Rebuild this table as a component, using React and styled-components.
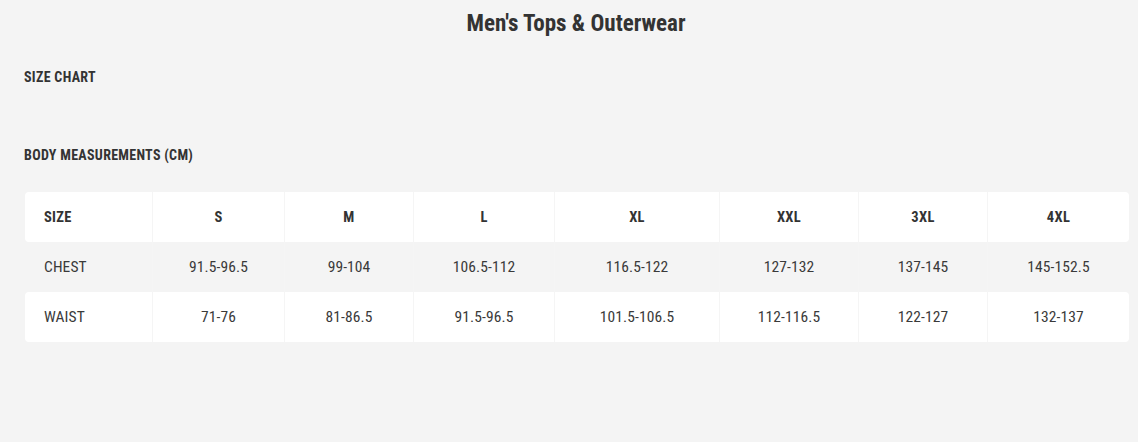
import React from "react";
import styled, { createGlobalStyle } from "styled-components";

const GlobalStyle = createGlobalStyle`
  html, body {
    margin: 0;
    padding: 0;
    background: #f4f4f4;
  }
  body {
    font-family: "Roboto", "Liberation Sans", sans-serif;
    font-stretch: 75%;
    color: #333;
  }
`;

const sizes = ["S", "M", "L", "XL", "XXL", "3XL", "4XL"];
const widths = [128, 132, 129, 141, 165, 139, 129, 141];

const rows = [
  { name: "CHEST", values: ["91.5-96.5", "99-104", "106.5-112", "116.5-122", "127-132", "137-145", "145-152.5"] },
  { name: "WAIST", values: ["71-76", "81-86.5", "91.5-96.5", "101.5-106.5", "112-116.5", "122-127", "132-137"] },
];

function App() {
  return (
    <>
      <GlobalStyle />
      <Page>
        <Title>Men's Tops &amp; Outerwear</Title>
        <SectionLabel>SIZE CHART</SectionLabel>
        <SubLabel>BODY MEASUREMENTS (CM)</SubLabel>
        <Chart>
          <colgroup>
            {widths.map((w, i) => (
              <Col key={i} $w={w} />
            ))}
          </colgroup>
          <thead>
            <Row $white>
              <Head $left>SIZE</Head>
              {sizes.map((s) => (
                <Head key={s}>{s}</Head>
              ))}
            </Row>
          </thead>
          <tbody>
            {rows.map((r, idx) => (
              <Row key={r.name} $white={idx % 2 === 1}>
                <Cell $left>{r.name}</Cell>
                {r.values.map((v, i) => (
                  <Cell key={i}>{v}</Cell>
                ))}
              </Row>
            ))}
          </tbody>
        </Chart>
      </Page>
    </>
  );
}

const Page = styled.div`
  width: 1138px;
  height: 442px;
  padding: 9px 9px 0 25px;
  box-sizing: border-box;
`;

const Title = styled.h1`
  margin: 0 -9px 0 -25px;
  padding-left: 14px;
  text-align: center;
  font-size: 23px;
  font-weight: 700;
  line-height: 30px;
  letter-spacing: 0;
  color: #333;
`;

const SectionLabel = styled.h2`
  margin: 29px 0 0 -1px;
  font-size: 14px;
  font-weight: 700;
  line-height: 18px;
  letter-spacing: 0.3px;
  color: #333;
`;

const SubLabel = styled(SectionLabel)`
  margin-top: 60px;
`;

const Chart = styled.table`
  margin-top: 28px;
  width: 1104px;
  border-collapse: separate;
  border-spacing: 0;
  table-layout: fixed;
`;

const Col = styled.col`
  width: ${(p) => p.$w}px;
`;

const Row = styled.tr`
  height: 50px;
  background: ${(p) => (p.$white ? "#fff" : "transparent")};
  & > *:first-child {
    border-radius: 4px 0 0 4px;
  }
  & > *:last-child {
    border-radius: 0 4px 4px 0;
    border-right: none;
  }
`;

const Head = styled.th`
  padding: ${(p) => (p.$left ? "0 0 0 19px" : "0")};
  text-align: ${(p) => (p.$left ? "left" : "center")};
  font-size: 14.5px;
  font-weight: 700;
  letter-spacing: 0.3px;
  color: #333;
  border-right: 1px solid #f5f5f5;
`;

const Cell = styled.td`
  padding: ${(p) => (p.$left ? "0 0 0 19px" : "0")};
  text-align: ${(p) => (p.$left ? "left" : "center")};
  font-size: 15.5px;
  font-weight: 400;
  letter-spacing: 0.1px;
  color: #3a3a3a;
  border-right: 1px solid #f5f5f5;
`;

export default App;
